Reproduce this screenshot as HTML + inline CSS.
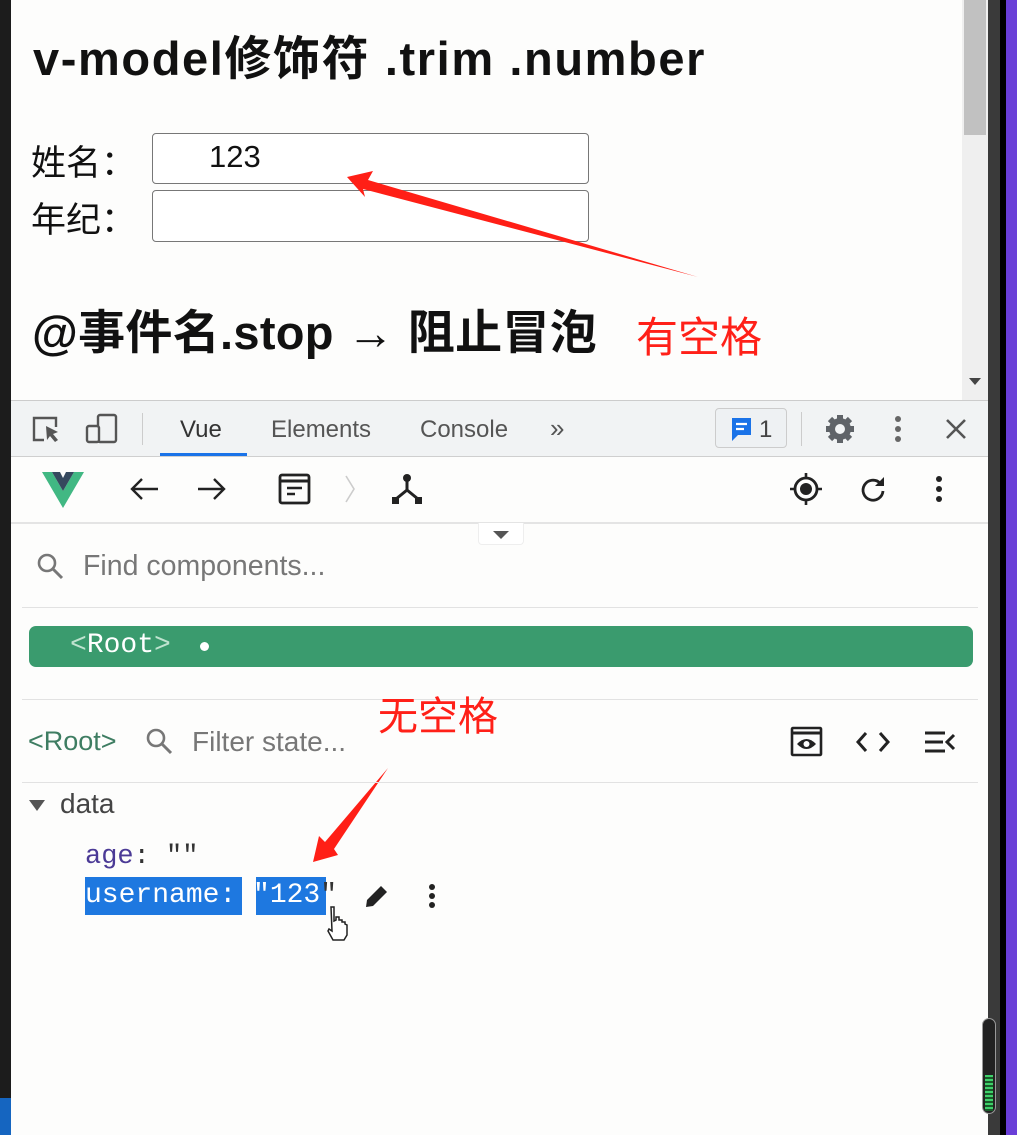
<!DOCTYPE html>
<html><head><meta charset="utf-8"><style>
*{margin:0;padding:0;box-sizing:border-box}
body{width:1017px;height:1135px;position:relative;overflow:hidden;background:#fdfdfc;font-family:"Liberation Sans","Noto Sans CJK SC",sans-serif}
.a{position:absolute}
.mono{font-family:"Liberation Mono","DejaVu Sans Mono",monospace}
.hl{border-top:1px solid #e2e2e2;left:22px;width:956px;height:0}
</style></head><body>
<div class="a" style="left:0;top:0;width:11px;height:1135px;background:#1c1c1c"></div>
<div class="a" style="left:0;top:1098px;width:11px;height:37px;background:#1565c0"></div>
<div class="a" style="left:988px;top:0;width:12px;height:1135px;background:#3a3a3a"></div>
<div class="a" style="left:1000px;top:0;width:6px;height:1135px;background:#000"></div>
<div class="a" style="left:1006px;top:0;width:11px;height:1135px;background:#6a3fd8"></div>
<div class="a" style="left:962px;top:0;width:26px;height:400px;background:#efefef"></div>
<div class="a" style="left:964px;top:0;width:22px;height:135px;background:#c1c1c1"></div>
<div class="a" style="left:969px;top:378px;width:0;height:0;border-left:6px solid transparent;border-right:6px solid transparent;border-top:7px solid #444"></div>

<div class="a" style="left:33px;top:20px;font-size:47px;font-weight:bold;color:#111;white-space:nowrap;letter-spacing:1.6px">v-model修饰符 .trim .number</div>
<div class="a" style="left:31px;top:135px;font-size:35px;color:#111;white-space:nowrap">姓名：</div>
<div class="a" style="left:31px;top:192px;font-size:35px;color:#111;white-space:nowrap">年纪：</div>
<div class="a" style="left:152px;top:133px;width:437px;height:51px;border:1.5px solid #777;border-radius:4px;background:#fff"></div>
<div class="a" style="left:152px;top:190px;width:437px;height:52px;border:1.5px solid #777;border-radius:4px;background:#fff"></div>
<div class="a" style="left:209px;top:139px;font-size:31px;color:#111">123</div>
<div class="a" style="left:32px;top:294px;font-size:47px;font-weight:bold;color:#111;white-space:nowrap;letter-spacing:0.3px">@事件名.stop → 阻止冒泡</div>
<div class="a" style="left:636px;top:304px;font-size:42px;color:#ff2018;white-space:nowrap">有空格</div>
<svg class="a" style="left:0;top:0" width="1017" height="1135">
<polygon points="347,177 373,171 368,180 698,277 363,189 365,197" fill="#ff1f16"/>
<polygon points="313,862 319,836 325,842 388,768 334,849 338,855" fill="#ff1f16"/>
</svg>

<div class="a" style="left:11px;top:400px;width:977px;height:57px;background:#f1f3f4;border-top:1px solid #ccc;border-bottom:1px solid #cfcfcf"></div>
<svg class="a" style="left:30px;top:412px" width="100" height="34">
<path d="M14 28H4V6h22v9" fill="none" stroke="#555" stroke-width="2.4"/>
<path d="M16 14l12 6-5 2 5 6-3 2-5-6-3 4z" fill="#555"/>
<rect x="68" y="3" width="18" height="27" rx="2" fill="none" stroke="#555" stroke-width="2.4"/>
<rect x="57" y="14" width="12" height="16" rx="2" fill="#f1f3f4" stroke="#555" stroke-width="2.4"/>
</svg>
<div class="a" style="left:142px;top:413px;width:1px;height:32px;background:#ccc"></div>
<div class="a" style="left:180px;top:416px;font-size:24px;color:#333">Vue</div>
<div class="a" style="left:160px;top:453px;width:87px;height:3px;background:#1a73e8"></div>
<div class="a" style="left:271px;top:416px;font-size:24px;color:#555">Elements</div>
<div class="a" style="left:420px;top:416px;font-size:24px;color:#555">Console</div>
<div class="a" style="left:550px;top:413px;font-size:26px;color:#555">»</div>
<div class="a" style="left:715px;top:408px;width:72px;height:40px;border:1px solid #ccc;border-radius:4px;background:#eef1f3"></div>
<svg class="a" style="left:729px;top:416px" width="26" height="28"><path d="M3 2h19v17H9l-6 6z" fill="#1a73e8"/><path d="M7 8h11M7 13h8" stroke="#fff" stroke-width="2.2"/></svg>
<div class="a" style="left:759px;top:416px;font-size:24px;color:#444">1</div>
<div class="a" style="left:801px;top:412px;width:1px;height:34px;background:#ccc"></div>
<svg class="a" style="left:823px;top:412px" width="34" height="34"><g fill="#5f6368"><circle cx="17" cy="17" r="11"/><g stroke="#5f6368" stroke-width="6"><path d="M17 3v28M3 17h28M7 7l20 20M27 7L7 27"/></g></g><circle cx="17" cy="17" r="5" fill="#f1f3f4"/></svg>
<svg class="a" style="left:890px;top:412px" width="16" height="34"><g fill="#666"><circle cx="8" cy="7" r="3"/><circle cx="8" cy="17" r="3"/><circle cx="8" cy="27" r="3"/></g></svg>
<svg class="a" style="left:944px;top:417px" width="24" height="24"><path d="M3 3l18 18M21 3L3 21" stroke="#555" stroke-width="2.6"/></svg>

<svg class="a" style="left:40px;top:470px" width="46" height="40"><path d="M2 2h10l11 19 11-19h10L23 38z" fill="#41b883"/><path d="M12 2h8l3 6 3-6h8L23 21z" fill="#35495e"/></svg>
<svg class="a" style="left:128px;top:474px" width="110" height="30"><path d="M30 15H5M14 5L4 15l10 10" fill="none" stroke="#222" stroke-width="2.4"/><path d="M70 15h25M86 5l10 10-10 10" fill="none" stroke="#222" stroke-width="2.4"/></svg>
<svg class="a" style="left:278px;top:473px" width="34" height="32"><rect x="2" y="2" width="29" height="28" rx="2" fill="none" stroke="#222" stroke-width="2.8"/><path d="M2 8h29" stroke="#222" stroke-width="3"/><path d="M9 15h15M9 21h8" stroke="#222" stroke-width="2.6"/></svg>
<svg class="a" style="left:343px;top:474px" width="14" height="30"><path d="M3 2l8 13-8 13" fill="none" stroke="#ccc" stroke-width="1.6"/></svg>
<svg class="a" style="left:391px;top:473px" width="32" height="32"><circle cx="16" cy="5" r="4" fill="#222"/><path d="M16 5v12L5 26M16 17l11 9" stroke="#222" stroke-width="3" fill="none"/><rect x="1" y="24" width="7" height="7" fill="#222"/><rect x="24" y="24" width="7" height="7" fill="#222"/></svg>
<svg class="a" style="left:788px;top:471px" width="36" height="36"><circle cx="18" cy="18" r="11" fill="none" stroke="#222" stroke-width="2.8"/><circle cx="18" cy="18" r="6" fill="#222"/><path d="M18 2v5M18 29v5M2 18h5M29 18h5" stroke="#222" stroke-width="2.6"/></svg>
<svg class="a" style="left:858px;top:474px" width="32" height="32"><path d="M25 17a10 10 0 1 1-3-8" fill="none" stroke="#222" stroke-width="2.8"/><path d="M26 3v9h-9z" fill="#222"/></svg>
<svg class="a" style="left:931px;top:473px" width="16" height="32"><g fill="#222"><circle cx="8" cy="6" r="3"/><circle cx="8" cy="16" r="3"/><circle cx="8" cy="26" r="3"/></g></svg>
<div class="a hl" style="top:522px;left:11px;width:977px;border-top:2px solid #e4e4e4"></div>
<div class="a" style="left:478px;top:523px;width:46px;height:22px;background:#fff;border:1px solid #eee;border-top:none;border-radius:0 0 4px 4px"></div>
<div class="a" style="left:493px;top:531px;width:0;height:0;border-left:8px solid transparent;border-right:8px solid transparent;border-top:8px solid #555"></div>

<svg class="a" style="left:36px;top:552px" width="30" height="30"><circle cx="11" cy="11" r="8" fill="none" stroke="#777" stroke-width="2.6"/><path d="M17 17l9 9" stroke="#777" stroke-width="3"/></svg>
<div class="a" style="left:83px;top:550px;font-size:28.5px;color:#777">Find components...</div>
<div class="a hl" style="top:607px"></div>
<div class="a" style="left:29px;top:626px;width:944px;height:41px;background:#3a9b6e;border-radius:7px"></div>
<div class="a mono" style="left:70px;top:630px;font-size:28px;color:#fff"><span style="color:#bfe3cf">&lt;</span>Root<span style="color:#bfe3cf">&gt;</span></div>
<div class="a" style="left:200px;top:642px;width:9px;height:9px;border-radius:50%;background:#fff"></div>
<div class="a hl" style="top:699px"></div>
<div class="a" style="left:378px;top:684px;font-size:40px;color:#ff2018;white-space:nowrap">无空格</div>

<div class="a" style="left:28px;top:726px;font-size:27px;color:#3e7d62">&lt;Root&gt;</div>
<svg class="a" style="left:145px;top:727px" width="30" height="30"><circle cx="11" cy="11" r="8" fill="none" stroke="#777" stroke-width="2.6"/><path d="M17 17l9 9" stroke="#777" stroke-width="3"/></svg>
<div class="a" style="left:192px;top:726px;font-size:28px;color:#777">Filter state...</div>
<svg class="a" style="left:790px;top:726px" width="34" height="32"><rect x="2" y="2" width="29" height="27" rx="1" fill="none" stroke="#222" stroke-width="2.6"/><path d="M2 7h29" stroke="#222" stroke-width="3"/><path d="M7 18q9.5-10 19 0q-9.5 10-19 0z" fill="#222"/><circle cx="16.5" cy="18" r="3" fill="#fff"/></svg>
<svg class="a" style="left:855px;top:730px" width="36" height="24"><path d="M11 3l-8 9 8 9M25 3l8 9-8 9" fill="none" stroke="#222" stroke-width="3"/></svg>
<svg class="a" style="left:923px;top:730px" width="34" height="24"><path d="M2 3h20M2 12h18M2 21h20" stroke="#222" stroke-width="3"/><path d="M31 5l-7 7 7 7" fill="none" stroke="#222" stroke-width="3"/></svg>
<div class="a hl" style="top:782px"></div>

<div class="a" style="left:29px;top:800px;width:0;height:0;border-left:8px solid transparent;border-right:8px solid transparent;border-top:11px solid #555"></div>
<div class="a" style="left:60px;top:788px;font-size:28px;color:#444">data</div>
<div class="a mono" style="left:85px;top:842px;font-size:27px;color:#4b3a96">age<span style="color:#333">: </span><span style="color:#333">""</span></div>
<div class="a" style="left:85px;top:877px;width:157px;height:38px;background:#1e78e0"></div>
<div class="a" style="left:256px;top:877px;width:70px;height:38px;background:#1e78e0"></div>
<div class="a mono" style="left:85px;top:880px;font-size:28px;color:#fff;white-space:pre">username: "123<span style="color:#333">"</span></div>
<svg class="a" style="left:363px;top:882px" width="28" height="28"><path d="M3 25l1-7L18 4l6 6L10 24z" fill="#222"/></svg>
<svg class="a" style="left:425px;top:882px" width="14" height="30"><g fill="#222"><circle cx="7" cy="5" r="3"/><circle cx="7" cy="14" r="3"/><circle cx="7" cy="23" r="3"/></g></svg>
<svg class="a" style="left:325px;top:905px" width="26" height="36"><path d="M6 2h3v14l2-1v-3h3v3h3v2h3v2l2 1v10l-3 5H8l-5-9 1-2 3 2z" fill="#fff" stroke="#222" stroke-width="1.5"/></svg>

<div class="a" style="left:982px;top:1018px;width:14px;height:96px;border:1px solid #999;border-radius:7px;background:#222"></div>
<div class="a" style="left:985px;top:1075px;width:8px;height:36px;background:repeating-linear-gradient(#3ed06a 0 2px,#1a5a2a 2px 4px)"></div>
</body></html>
